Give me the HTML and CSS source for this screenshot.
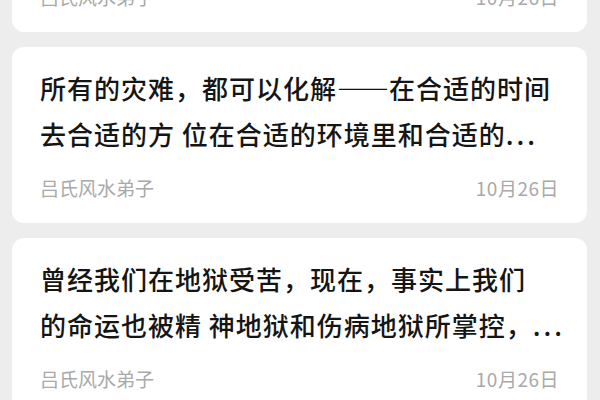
FILE: index.html
```html
<!DOCTYPE html>
<html lang="zh-CN">
<head>
<meta charset="utf-8">
<link rel="stylesheet" href="styles.css">
</head>
<body>
<div class="list">
  <div class="card card-first">
    <div class="meta">
      <span class="author">吕氏风水弟子</span>
      <span class="date">10月26日</span>
    </div>
  </div>
  <div class="card">
    <div class="title">
      <span class="line">所有的灾难，都可以化解<span class="dash">——</span>在合适的时间</span>
      <span class="line">去合适的方 位在合适的环境里和合适的<span class="dots">...</span></span>
    </div>
    <div class="meta">
      <span class="author">吕氏风水弟子</span>
      <span class="date">10月26日</span>
    </div>
  </div>
  <div class="card">
    <div class="title">
      <span class="line">曾经我们在地狱受苦，现在，事实上我们</span>
      <span class="line">的命运也被精 神地狱和伤病地狱所掌控，<span class="dots">...</span></span>
    </div>
    <div class="meta">
      <span class="author">吕氏风水弟子</span>
      <span class="date">10月26日</span>
    </div>
  </div>
</div>
</body>
</html>
```
FILE: styles.css
```css
html, body {
  margin: 0;
  padding: 0;
  background: #ededed;
  font-family: "Noto Sans CJK SC", "Noto Sans", sans-serif;
  overflow: hidden;
}
.list {
  display: flex;
  flex-direction: column;
  gap: 15px;
  padding: 0 13px 0 12px;
  margin-top: -144px;
}
.card {
  background: #ffffff;
  border-radius: 12px;
  padding: 18px 28px 21px 28px;
  display: flex;
  flex-direction: column;
  gap: 17px;
}
.title {
  display: flex;
  flex-direction: column;
  font-size: 26px;
  letter-spacing: 1px;
  line-height: 46px;
  color: #151515;
  font-weight: 500;
}
.line {
  display: block;
  white-space: nowrap;
}
.dash {
  letter-spacing: -5px;
  margin-right: 5px;
}
.dots {
  letter-spacing: 3px;
}
.meta {
  display: flex;
  justify-content: space-between;
  align-items: center;
  font-size: 19px;
  line-height: 28px;
  color: #a9a9a9;
}
.date {
  letter-spacing: 0.5px;
}
.card-first {
  padding-top: 127px;
}
```
